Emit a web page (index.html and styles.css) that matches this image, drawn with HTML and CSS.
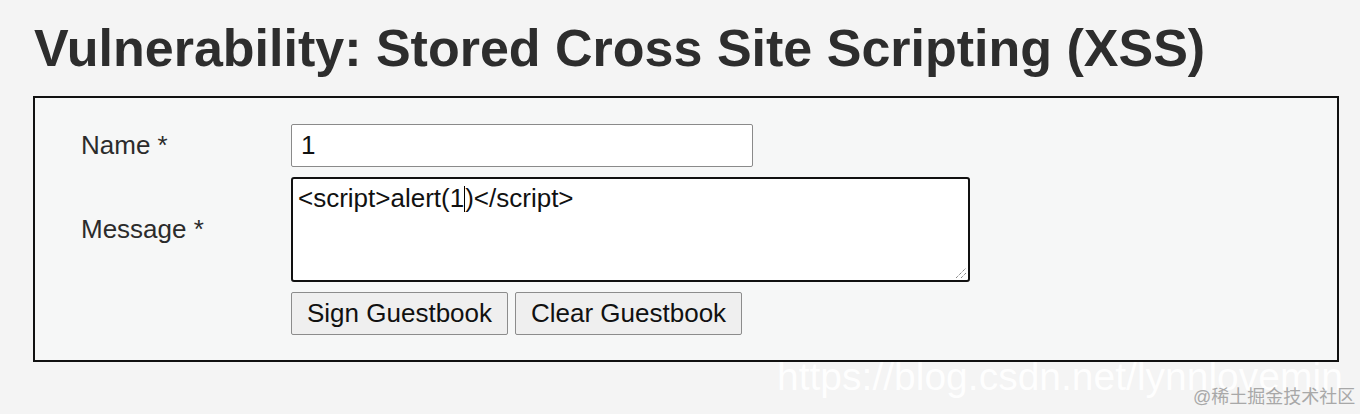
FILE: index.html
```html
<!DOCTYPE html>
<html>
<head>
<meta charset="utf-8">
<link rel="stylesheet" href="styles.css">
</head>
<body>
<div class="page">
  <h1 class="title">Vulnerability: Stored Cross Site Scripting (XSS)</h1>
  <div class="panel">
    <div class="row">
      <div class="label">Name *</div>
      <div class="field"><div class="input">1</div></div>
    </div>
    <div class="row msg">
      <div class="label">Message *</div>
      <div class="field">
        <div class="textarea">&lt;script&gt;alert(1<span class="caret"></span>)&lt;/script&gt;
          <svg class="grip" width="12" height="12" viewBox="0 0 12 12"><path d="M1 11 L11 1 M6 11 L11 6" stroke="#555" stroke-width="1" stroke-dasharray="1 1"/></svg>
        </div>
        <div class="buttons">
          <div class="btn">Sign Guestbook</div>
          <div class="btn">Clear Guestbook</div>
        </div>
      </div>
    </div>
  </div>
  <div class="wm-url">https://blog.csdn.net/lynnlovemin</div>
  <div class="wm-brand">@稀土掘金技术社区</div>
</div>
</body>
</html>
```
FILE: styles.css
```css
html, body { margin: 0; padding: 0; }
body {
  background: #f4f4f4;
  font-family: "Liberation Sans", Arial, sans-serif;
  color: #2c2c2c;
  width: 1360px;
  height: 414px;
  overflow: hidden;
}
.page { position: relative; padding: 18px 21px 0 33px; }
.title {
  margin: 0 0 0 1px;
  font-size: 52px;
  font-weight: bold;
  line-height: 60px;
  height: 78px;
  color: #2d2d2d;
}
.panel {
  box-sizing: border-box;
  width: 1306px;
  height: 266px;
  border: 2px solid #111;
  background: #f6f7f7;
  padding: 26px 0 0 46px;
}
.row { display: flex; }
.label {
  width: 210px;
  font-size: 26px;
  color: #2b2b2b;
}
.row:first-child .label { padding-top: 6px; }
.msg { margin-top: 10px; }
.msg .label { padding-top: 37px; }
.input {
  box-sizing: border-box;
  width: 462px;
  height: 43px;
  border: 1px solid #8a8a8a;
  border-radius: 2px;
  background: #fff;
  font-size: 26px;
  line-height: 30px;
  padding: 5px 9px;
  color: #111;
}
.textarea {
  position: relative;
  box-sizing: border-box;
  width: 679px;
  height: 105px;
  border: 2px solid #111;
  border-radius: 3px;
  background: #fff;
  font-size: 26px;
  line-height: 30px;
  padding: 4px 5px;
  color: #111;
}
.caret {
  display: inline-block;
  width: 1px;
  height: 26px;
  background: #000;
  vertical-align: -5px;
}
.grip { position: absolute; right: 1px; bottom: 1px; }
.buttons { display: flex; gap: 7px; margin-top: 10px; }
.btn {
  box-sizing: border-box;
  height: 43px;
  padding: 0 15px;
  border: 1px solid #8c8c8c;
  border-radius: 2px;
  background: #efefef;
  font-size: 26px;
  line-height: 41px;
  color: #111;
}
.wm-url {
  position: absolute;
  left: 777px;
  top: 355px;
  font-size: 39px;
  color: #ffffff;
  opacity: 0.95;
}
.wm-brand {
  position: absolute;
  left: 1193px;
  top: 382px;
  font-size: 18px;
  color: #a8a8a8;
  font-family: "Liberation Sans", "Noto Sans CJK SC", sans-serif;
}
```
